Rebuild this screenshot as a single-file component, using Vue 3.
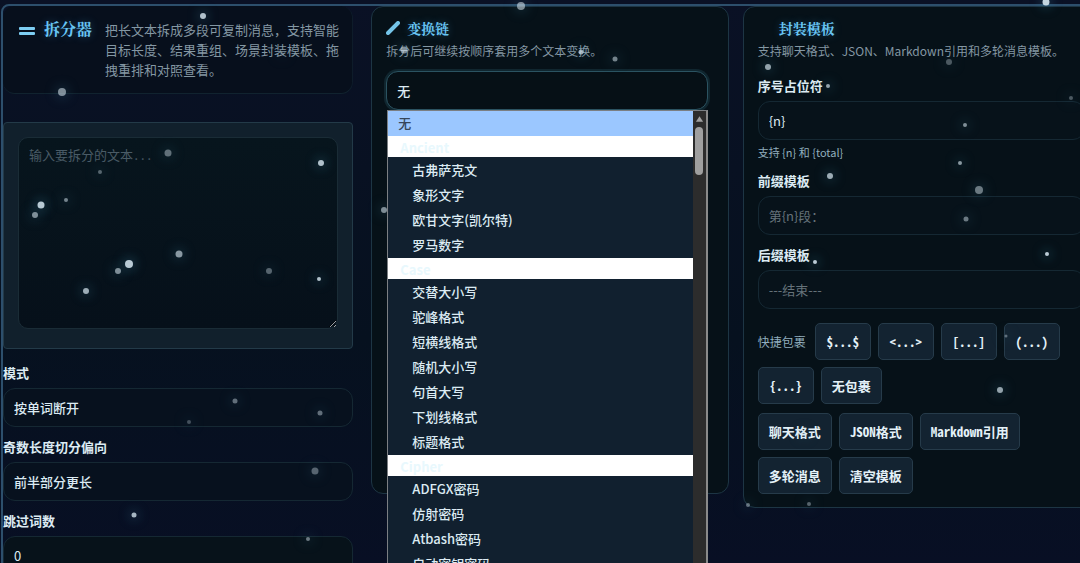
<template>
  <div class="page">
    <main class="shell">
      <div class="column source">
        <header class="intro">
          <svg class="intro-icon" viewBox="0 0 16 8" aria-hidden="true">
            <rect x="0" y="0" width="16" height="3" rx="1" />
            <rect x="0" y="5" width="16" height="3" rx="1" />
          </svg>
          <h1>拆分器</h1>
          <p>把长文本拆成多段可复制消息，支持智能目标长度、结果重组、场景封装模板、拖拽重排和对照查看。</p>
        </header>

        <section class="text-panel">
          <textarea v-model="text" aria-label="输入文本" placeholder="输入要拆分的文本..."></textarea>
        </section>

        <div class="field">
          <label for="mode">模式</label>
          <select id="mode" v-model="mode" class="control">
            <option>按单词断开</option>
            <option>按固定长度</option>
          </select>
        </div>
        <div class="field">
          <label for="bias">奇数长度切分偏向</label>
          <select id="bias" v-model="bias" class="control">
            <option>前半部分更长</option>
            <option>后半部分更长</option>
          </select>
        </div>
        <div class="field">
          <label for="skip">跳过词数</label>
          <input id="skip" v-model="skip" class="control dark" type="text" />
        </div>
      </div>

      <section class="column card chain">
        <h2>
          <svg viewBox="0 0 14 14" aria-hidden="true">
            <path d="M2 12 L9 5" />
            <path d="M10 4 L12 2" />
          </svg>
          变换链
        </h2>
        <p class="desc">拆分后可继续按顺序套用多个文本变换。</p>
        <div class="picker">
          <select v-model="transform" class="control focused" aria-label="变换" @mousedown.prevent="open = !open">
            <option>无</option>
            <optgroup v-for="group in groups" :key="group.name" :label="group.name">
              <option v-for="item in group.items" :key="item">{{ item }}</option>
            </optgroup>
          </select>

          <div v-if="open" class="popup">
            <ul role="listbox" aria-label="变换列表">
              <li class="item root" role="option" aria-selected="true" @click="choose('无')">无</li>
              <template v-for="group in groups" :key="group.name">
                <li class="group" role="presentation">{{ group.name }}</li>
                <li
                  v-for="item in group.items"
                  :key="item"
                  class="item"
                  role="option"
                  @click="choose(item)"
                >{{ item }}</li>
              </template>
            </ul>
            <div class="scrollbar">
              <svg viewBox="0 0 10 8" aria-hidden="true"><path d="M5 1 L9 7 H1 Z" /></svg>
              <div class="thumb"></div>
            </div>
          </div>
        </div>
      </section>

      <section class="column card templates">
        <h2 class="indent">封装模板</h2>
        <p class="desc">支持聊天格式、JSON、Markdown引用和多轮消息模板。</p>
        <div class="field first">
          <label for="token">序号占位符</label>
          <input id="token" v-model="token" class="control" type="text" />
          <small>支持 {n} 和 {total}</small>
        </div>
        <div class="field">
          <label for="prefix">前缀模板</label>
          <input id="prefix" v-model="prefix" class="control" type="text" placeholder="第{n}段：" />
        </div>
        <div class="field">
          <label for="suffix">后缀模板</label>
          <input id="suffix" v-model="suffix" class="control" type="text" placeholder="---结束---" />
        </div>

        <div class="buttons wraps">
          <span class="buttons-label">快捷包裹</span>
          <button v-for="wrap in wraps" :key="wrap" type="button" @click="applyWrap(wrap)">{{ wrap }}</button>
        </div>
        <div class="buttons">
          <button v-for="preset in presets" :key="preset" type="button">{{ preset }}</button>
        </div>
      </section>
    </main>

    <div class="particles" aria-hidden="true">
      <i
        v-for="(p, i) in particles"
        :key="i"
        :style="{ left: p[0] + 'px', top: p[1] + 'px', width: p[2] + 'px', height: p[2] + 'px', opacity: p[3] }"
      ></i>
    </div>
  </div>
</template>

<script setup>
import { ref } from 'vue'

const text = ref('')
const mode = ref('按单词断开')
const bias = ref('前半部分更长')
const skip = ref('0')
const transform = ref('无')
const open = ref(true)
const token = ref('{n}')
const prefix = ref('')
const suffix = ref('')

const groups = [
  { name: 'Ancient', items: ['古弗萨克文', '象形文字', '欧甘文字(凯尔特)', '罗马数字'] },
  { name: 'Case', items: ['交替大小写', '驼峰格式', '短横线格式', '随机大小写', '句首大写', '下划线格式', '标题格式'] },
  { name: 'Cipher', items: ['ADFGX密码', '仿射密码', 'Atbash密码', '自动密钥密码'] }
]

const wraps = ['$...$', '<...>', '[...]', '(...)', '{...}', '无包裹']
const presets = ['聊天格式', 'JSON格式', 'Markdown引用', '多轮消息', '清空模板']

// x, y, size, opacity
const particles = [
  [203, 16, 6, 0.85], [62, 92, 8, 0.6], [168, 153, 7, 0.45], [321, 163, 6, 0.85],
  [100, 172, 4, 0.4], [66, 200, 4, 0.55], [41, 205, 7, 0.9], [35, 215, 6, 0.6],
  [179, 254, 7, 0.65], [129, 264, 8, 0.9], [118, 271, 6, 0.6], [86, 291, 6, 0.75],
  [269, 271, 6, 0.4], [319, 279, 4, 0.85], [235, 401, 5, 0.45], [320, 413, 5, 0.45],
  [189, 422, 4, 0.3], [315, 471, 7, 0.4], [134, 515, 5, 0.8], [308, 539, 4, 0.5],
  [521, 6, 8, 0.6], [404, 50, 7, 0.6], [581, 52, 5, 0.7], [615, 59, 5, 0.55],
  [384, 210, 6, 0.6], [1046, 2, 7, 0.95], [768, 67, 6, 0.7], [949, 62, 6, 0.35],
  [828, 86, 4, 0.7], [1071, 98, 4, 0.35], [965, 125, 4, 0.6], [960, 163, 4, 0.65],
  [830, 176, 6, 0.75], [979, 190, 8, 0.5], [966, 219, 5, 0.5], [1047, 254, 4, 0.9],
  [815, 262, 4, 0.9], [1000, 390, 6, 0.7], [1006, 336, 3, 0.4], [804, 434, 5, 0.4],
  [748, 505, 4, 0.45], [809, 504, 4, 0.4], [282, 54, 4, 0.2]
]

function choose(item) {
  transform.value = item
  open.value = false
}

function applyWrap(wrap) {
  const parts = wrap.split('...')
  prefix.value = parts.length > 1 ? parts[0] : ''
  suffix.value = parts.length > 1 ? parts[1] : ''
}
</script>

<style>
body {
  background: #071021;
}
</style>

<style scoped>
.page {
  position: relative;
  height: 100vh;
  overflow: hidden;
  padding: 4px 0 0 1px;
  box-sizing: border-box;
  font-family: "Noto Sans CJK SC", "Noto Sans", sans-serif;
  font-size: 13px;
  line-height: 20px;
  color: #dcebf3;
  background: linear-gradient(180deg, #0a1125 0%, #06111f 60%, #080f24 100%);
}
.page *,
.page *::before {
  box-sizing: border-box;
}
h1,
h2,
p,
ul {
  margin: 0;
  padding: 0;
}
.shell {
  display: grid;
  grid-template-columns: minmax(0, 354fr) minmax(0, 357fr) minmax(0, 357fr);
  gap: 14px;
  align-items: start;
  min-height: 100%;
  margin-right: -22px;
  border: 2px solid #2d4f6c;
  border-radius: 8px;
}
.source {
  padding-right: 4px;
}
.intro {
  display: flex;
  align-items: flex-start;
  padding: 14px 12px 13px 16px;
  border-bottom: 1px solid #11232f;
  border-right: 1px solid #0e1c2a;
  border-radius: 12px;
  background: #070f1c;
}
.intro-icon {
  width: 16px;
  height: 8px;
  margin: 7px 9px 0 0;
  flex: none;
  fill: #7dcdf2;
}
h1,
h2 {
  font-family: "Noto Serif CJK SC", "Noto Sans CJK SC", serif;
  font-weight: 700;
  color: #68c5f4;
  text-shadow: 0 0 8px rgba(80, 180, 240, 0.3);
}
h1 {
  flex: none;
  margin-right: 13px;
  font-size: 16px;
  line-height: 18px;
}
h2 {
  display: flex;
  align-items: center;
  gap: 7px;
  font-size: 14px;
  line-height: 20px;
}
h2 svg {
  width: 14px;
  height: 14px;
  fill: none;
  stroke: #74c4e8;
  stroke-width: 4;
  stroke-linecap: round;
}
.indent {
  padding-left: 21px;
}
.intro p,
.desc {
  color: #8497a3;
}
.text-panel {
  margin: 28px 0 14px;
  padding: 14px 14px 19px;
  border: 1px solid #233a48;
  border-radius: 4px;
  background: #11202c;
}
textarea {
  display: block;
  width: 100%;
  height: 192px;
  padding: 8px 10px;
  border: 1px solid #1a2c36;
  border-radius: 10px;
  outline: none;
  background: linear-gradient(180deg, #07151d, #06101a);
  color: #dcebf3;
  font-family: "Noto Sans Mono CJK SC", "Noto Sans CJK SC", monospace;
  font-size: 13px;
  line-height: 18px;
  resize: vertical;
}
textarea::placeholder {
  color: #4a5b66;
}
.field {
  display: flex;
  flex-direction: column;
  margin-bottom: 10px;
}
.field label {
  margin-bottom: 5px;
  font-weight: 700;
}
.field small {
  margin-top: 3px;
  font-size: 11px;
  line-height: 18px;
  color: #91aebd;
}
.first {
  margin-top: 15px;
}
.control {
  appearance: none;
  width: 100%;
  height: 39px;
  padding: 0 10px;
  border: 1px solid #152833;
  border-radius: 12px;
  outline: none;
  background: #07111e;
  color: #dcebf3;
  font-family: inherit;
  font-size: 13px;
}
select.control {
  font-weight: 500;
}
.control::placeholder {
  color: #66727a;
}
.dark,
.templates .control {
  background: #07121a;
}
.card {
  padding: 11px 20px 14px 14px;
  border: 1px solid #1d3544;
  border-radius: 12px;
  background: #061118;
}
.desc {
  margin-top: 3px;
  font-size: 12px;
  white-space: nowrap;
}
.chain {
  min-height: 488px;
}
.templates {
  padding-right: 14px;
  padding-bottom: 13px;
}
.picker {
  position: relative;
  margin-top: 10px;
}
.picker .control {
  display: block;
  background: #061016;
}
.picker .focused {
  border-color: #2b5361;
  box-shadow: 0 0 0 2px #10262f;
}
.popup {
  position: absolute;
  z-index: 3;
  top: 39px;
  left: 1px;
  right: 0;
  height: calc(100vh - 110px);
  display: flex;
  overflow: hidden;
  border: 1px solid #7b7f83;
  border-right: 2px solid #8a8a8a;
  border-bottom: 0;
  background: #11202f;
}
.popup ul {
  flex: 1;
  list-style: none;
}
.item {
  height: 25px;
  padding-left: 24px;
  line-height: 24px;
  font-weight: 500;
}
.root {
  padding-left: 10px;
  background: #9bc7ff;
  color: #36465a;
}
.group {
  height: 22px;
  padding-left: 12px;
  line-height: 24px;
  font-weight: 700;
  border-bottom: 1px solid #11202f;
  background: #fff;
  background-clip: padding-box;
  color: #e8f8fd;
}
.scrollbar {
  width: 13px;
  padding: 4px 2px;
  background: #2c2c2c;
}
.scrollbar svg {
  display: block;
  width: 9px;
  height: 8px;
  fill: #a0a0a0;
}
.thumb {
  width: 8px;
  height: 48px;
  margin-top: 4px;
  border-radius: 4px;
  background: #9f9f9f;
}
.buttons {
  display: flex;
  flex-wrap: wrap;
  align-items: center;
  gap: 7px;
}
.wraps {
  margin: 14px 0 9px;
}
.buttons-label {
  margin-right: 2px;
  font-size: 12px;
  color: #91aebd;
}
button {
  min-width: 56px;
  height: 37px;
  padding: 0 10px;
  border: 1px solid #263b4a;
  border-radius: 5px;
  background: #132331;
  color: #e4f1f8;
  font-family: "Noto Sans Mono CJK SC", "Noto Sans CJK SC", monospace;
  font-size: 13px;
  line-height: 18px;
  font-weight: 700;
}
.particles {
  position: absolute;
  inset: 0;
  z-index: 2;
  pointer-events: none;
}
.particles i {
  position: absolute;
  border-radius: 50%;
  background: #cfe0ea;
  box-shadow: 0 0 12px 2px rgba(70, 150, 180, 0.4);
  transform: translate(-50%, -50%);
}
</style>
